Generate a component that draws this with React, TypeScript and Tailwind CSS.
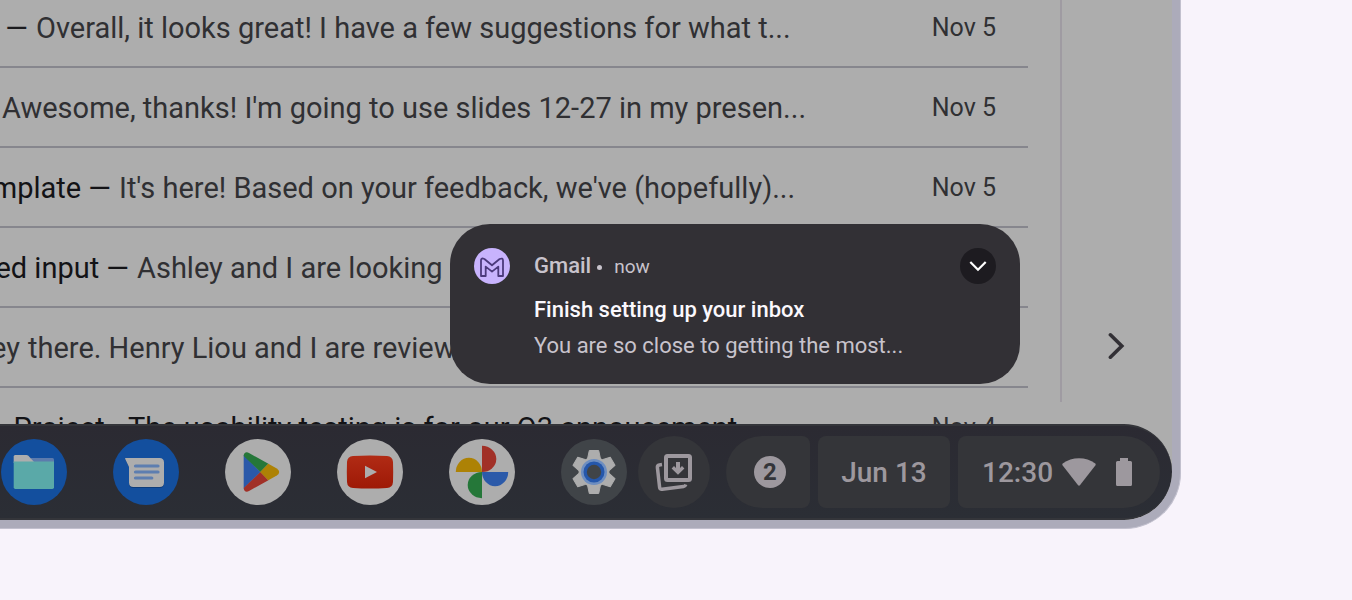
import type { ReactNode } from "react";

type Mail = { id: string; leadWidth: string; lead: string; leadTone: string; text: string; textTone: string; date: string };

const mails: Mail[] = [
  { id: "a", leadWidth: "w-9", lead: "—", leadTone: "text-[#1b1b1e]", text: "Overall, it looks great! I have a few suggestions for what t...", textTone: "text-[#303033]", date: "Nov 5" },
  { id: "b", leadWidth: "w-0.5", lead: "", leadTone: "", text: "Awesome, thanks! I'm going to use slides 12-27 in my presen...", textTone: "text-[#303033]", date: "Nov 5" },
  { id: "c", leadWidth: "w-[119px]", lead: "template —", leadTone: "text-[#131316]", text: "It's here! Based on your feedback, we've (hopefully)...", textTone: "text-[#303033]", date: "Nov 5" },
  { id: "d", leadWidth: "w-[137px]", lead: "need input —", leadTone: "text-[#131316]", text: "Ashley and I are looking", textTone: "text-[#303033]", date: "" },
  { id: "e", leadWidth: "w-7", lead: "Hey", leadTone: "text-[#303033]", text: "there. Henry Liou and I are reviewing", textTone: "text-[#303033]", date: "" },
  { id: "f", leadWidth: "w-32", lead: "Project -", leadTone: "text-[#131316]", text: "The usability testing is for our Q3 annoucement", textTone: "text-[#131316]", date: "Nov 4" },
];

function MailRow({ mail }: { mail: Mail }) {
  return (
    <li className="flex h-20 items-center border-b-2 border-[#86868d] pt-0.5 pr-8">
      <div className="flex min-w-0 flex-1 text-[29px] leading-10 whitespace-nowrap">
        <span className={`flex shrink-0 justify-end overflow-hidden ${mail.leadWidth} ${mail.leadTone}`}>
          {mail.lead && <span className="pr-2">{mail.lead}</span>}
        </span>
        <span className={mail.textTone}>{mail.text}</span>
      </div>
      <time className="text-[25px] leading-10 text-[#303033]">{mail.date}</time>
    </li>
  );
}

function AppButton({ label, tone, children }: { label: string; tone: string; children: ReactNode }) {
  return (
    <button aria-label={label} className={`size-[66px] shrink-0 rounded-full ${tone}`}>
      <svg viewBox="0 0 66 66" className="size-full">{children}</svg>
    </button>
  );
}

function Apps() {
  return (
    <div className="flex gap-[46px]">
      <AppButton label="Files" tone="bg-[#134f9e]">
        <path d="M30 19H51.5Q53 19 53 20.5V26H30Z" fill="#5c7bad" />
        <path d="M12.7 24V17.5Q12.7 16 14.2 16H25.5Q26.6 16 27.4 16.8L33.5 23.5Z" fill="#adadad" />
        <path d="M12.7 22.5H53V48.3Q53 50 51.3 50H14.4Q12.7 50 12.7 48.3Z" fill="#5aa9a8" />
      </AppButton>
      <AppButton label="Messages" tone="bg-[#134f9e]">
        <path d="M12 20H46.5Q51 20 51 24.5V44.5Q51 49 46.5 49H20.5Q16 49 16 44.5V28Z" fill="#0d3c7b" />
        <path d="M12 19H46.5Q51 19 51 23.5V43.5Q51 48 46.5 48H20.5Q16 48 16 43.5V28L12.3 20.3Q11.7 19 12.6 19Z" fill="#adadad" />
        <path d="M22.5 27H45M22.5 33H45M22.5 39H38.8" stroke="#5d7eb0" strokeWidth="3.2" strokeLinecap="round" />
      </AppButton>
      <AppButton label="Play Store" tone="bg-[#adadad]">
        <path d="M18.7 16V49.5L35.5 33Z" fill="#2b59a9" />
        <path d="M18.7 17C18.7 13.6 21.4 12.5 24 14L43.4 24.8L35.4 33Z" fill="#257739" />
        <path d="M18.7 49C18.7 52.4 21.4 53.5 24 52L43.4 41.2L35.4 33Z" fill="#a13027" />
        <path d="M43.3 24.7L51.8 29.5Q54.2 31 54.2 33Q54.2 35 51.8 36.5L43.3 41.3L35.2 33Z" fill="#ad8205" />
      </AppButton>
      <AppButton label="YouTube" tone="bg-[#adadad]">
        <defs>
          <linearGradient id="yt" x2="0" y2="1"><stop stopColor="#b12b15" /><stop offset="1" stopColor="#9e1906" /></linearGradient>
        </defs>
        <path d="M16 17Q33 16 50 17Q55.6 17.3 56 23Q56.4 33 56 43Q55.6 48.7 50 49Q33 50 16 49Q10.4 48.7 10 43Q9.6 33 10 23Q10.4 17.3 16 17Z" fill="url(#yt)" />
        <path d="M28 26.7L40 33L28 39.3Z" fill="#adadad" />
      </AppButton>
      <AppButton label="Photos" tone="bg-[#adadad]">
        <path d="M33 6.8A14.3 13.1 0 0 1 33 33Z" fill="#a13027" />
        <path d="M59.2 33A13.1 14.3 0 0 1 33 33Z" fill="#2b5aa9" />
        <path d="M33 59.2A14.3 13.1 0 0 1 33 33Z" fill="#257739" />
        <path d="M6.8 33A13.1 14.3 0 0 1 33 33Z" fill="#ad8205" />
      </AppButton>
      <AppButton label="Settings" tone="bg-[#404448]">
        <g fill="#adadad" stroke="#adadad" strokeWidth="1" strokeLinejoin="round">
          <circle cx="33" cy="33" r="15" />
          {[0, 60, 120, 180, 240, 300].map((angle) => (
            <path key={angle} d="M28.3 11.5H37.7L39.3 19L36 24H30L26.7 19Z" transform={`rotate(${angle} 33 33)`} />
          ))}
        </g>
        <circle cx="33" cy="33" r="13" fill="#6e8ec0" />
        <circle cx="33" cy="33" r="10.5" fill="#2557ab" />
        <circle cx="33" cy="33" r="7.2" fill="#404448" />
      </AppButton>
    </div>
  );
}

function StatusArea() {
  return (
    <>
      <button aria-label="Downloads" className="ml-[11px] size-[72px] shrink-0 rounded-full bg-[#343539]">
        <svg viewBox="0 0 72 72" className="size-full" fill="none" stroke="#9d989e">
          <path d="M24 28.6L21.3 29Q19.2 29.4 19.4 31.5L21.6 51.3Q21.9 53.6 24.1 53.3L45.5 50.6Q47.2 50.3 47.8 48.5" strokeWidth="3.5" />
          <rect x="28" y="20" width="24" height="24" rx="1.5" strokeWidth="4" fill="#343539" />
          <path d="M40 26V35.5" strokeWidth="4" />
          <path d="M34.8 31.2L40 36.4L45.2 31.2" strokeWidth="3.4" />
        </svg>
      </button>
      <div className="ml-4 flex gap-2 text-[28px] font-medium text-[#9d989e]">
        <button aria-label="2 notifications" className="flex h-[72px] w-[84px] items-center rounded-l-[36px] rounded-r-lg bg-[#343539] pl-7">
          <span className="flex size-8 items-center justify-center rounded-full bg-[#9d989e] text-2xl font-bold text-[#343539]">2</span>
        </button>
        <button className="h-[72px] w-[132px] rounded-lg bg-[#343539] pt-0.5">Jun 13</button>
        <button className="flex h-[72px] w-[202px] items-center rounded-l-lg rounded-r-[36px] bg-[#343539] pl-6">
          <span className="w-[68px] pt-0.5 text-left">12:30</span>
          <svg viewBox="0 0 34 28" className="ml-3 h-7 w-[34px]" fill="#9d989e">
            <path d="M0.7 5.4Q-0.1 6.4 0.7 7.5L15.9 27Q17 28.4 18.1 27L33.3 7.5Q34.1 6.4 33.3 5.4C24-1.6 10-1.6 0.7 5.4Z" />
          </svg>
          <svg viewBox="0 0 16 28" className="ml-5 h-7 w-4" fill="#9d989e">
            <path d="M4 0H12V3H14.5Q16 3 16 4.5V26.5Q16 28 14.5 28H1.5Q0 28 0 26.5V4.5Q0 3 1.5 3H4Z" />
          </svg>
        </button>
      </div>
    </>
  );
}

function Notification() {
  return (
    <section className="absolute right-[152px] bottom-10 flex w-[570px] gap-6 rounded-[40px] bg-[#323035] px-6 pt-6 pb-5">
      <svg viewBox="0 0 36 36" className="size-9 shrink-0">
        <circle cx="18" cy="18" r="18" fill="#c8b3fd" />
        <path d="M7 28V12.4Q7 10.3 9 10.5L10.4 11L18 17.3L25.6 11Q29 9.6 29 12.4V28H24.3V18.6L18 23.6L11.7 18.6V28Z" fill="none" stroke="#4c3a7c" strokeWidth="1.8" strokeLinejoin="round" />
      </svg>
      <div className="flex-1 text-[22px] leading-9 text-[#c8c3cc]">
        <p className="flex h-9 items-center">
          <span className="font-medium">Gmail</span>
          <span className="mt-0.5 mr-3 ml-1.5 size-[5px] rounded-full bg-[#c8c3cc]" />
          <time className="pt-0.5 text-[19px]">now</time>
        </p>
        <h2 className="mt-2 font-medium text-[#fbf8fd]">Finish setting up your inbox</h2>
        <p>You are so close to getting the most...</p>
      </div>
      <button aria-label="Expand notification" className="flex size-9 items-center justify-center rounded-full bg-[#1d1b20]">
        <svg viewBox="0 0 18 12" className="h-3 w-[18px]" fill="none" stroke="#fff" strokeWidth="2.2">
          <path d="M1.3 2L9 9.7L16.7 2" />
        </svg>
      </button>
    </section>
  );
}

export default function App() {
  return (
    <main className="min-h-screen bg-[#f8f3fb] pr-[171px] font-['Roboto','Liberation_Sans',sans-serif]">
      <div className="overflow-hidden rounded-br-[56px] border-r border-b border-[#c2c0ce] bg-[#acabba] pr-2 pb-2">
        <div className="overflow-hidden rounded-br-[48px] bg-[#adadad]">
          <div className="relative flex h-[424px] overflow-hidden">
            <ul className="-mt-3 min-w-0 flex-1">
              {mails.map((mail) => <MailRow key={mail.id} mail={mail} />)}
            </ul>
            <aside className="mb-[22px] ml-8 flex w-28 items-end border-l-2 border-[#9f9ba2] pb-10 pl-[46px]">
              <button aria-label="Show side panel" className="flex h-8 w-5 items-center">
                <svg viewBox="0 0 18 28" className="h-7 w-[18px]" fill="none" stroke="#323035" strokeWidth="3.6">
                  <path d="M2.4 2.8L13.8 14L2.4 25.2" strokeLinecap="round" />
                </svg>
              </button>
            </aside>
            <Notification />
          </div>
          <nav className="flex h-24 items-center justify-end rounded-r-[48px] border-y-2 border-y-[#34353a] bg-linear-to-b from-[#2b2a32] to-[#2b2e35] pr-3">
            <Apps />
            <StatusArea />
          </nav>
        </div>
      </div>
    </main>
  );
}
